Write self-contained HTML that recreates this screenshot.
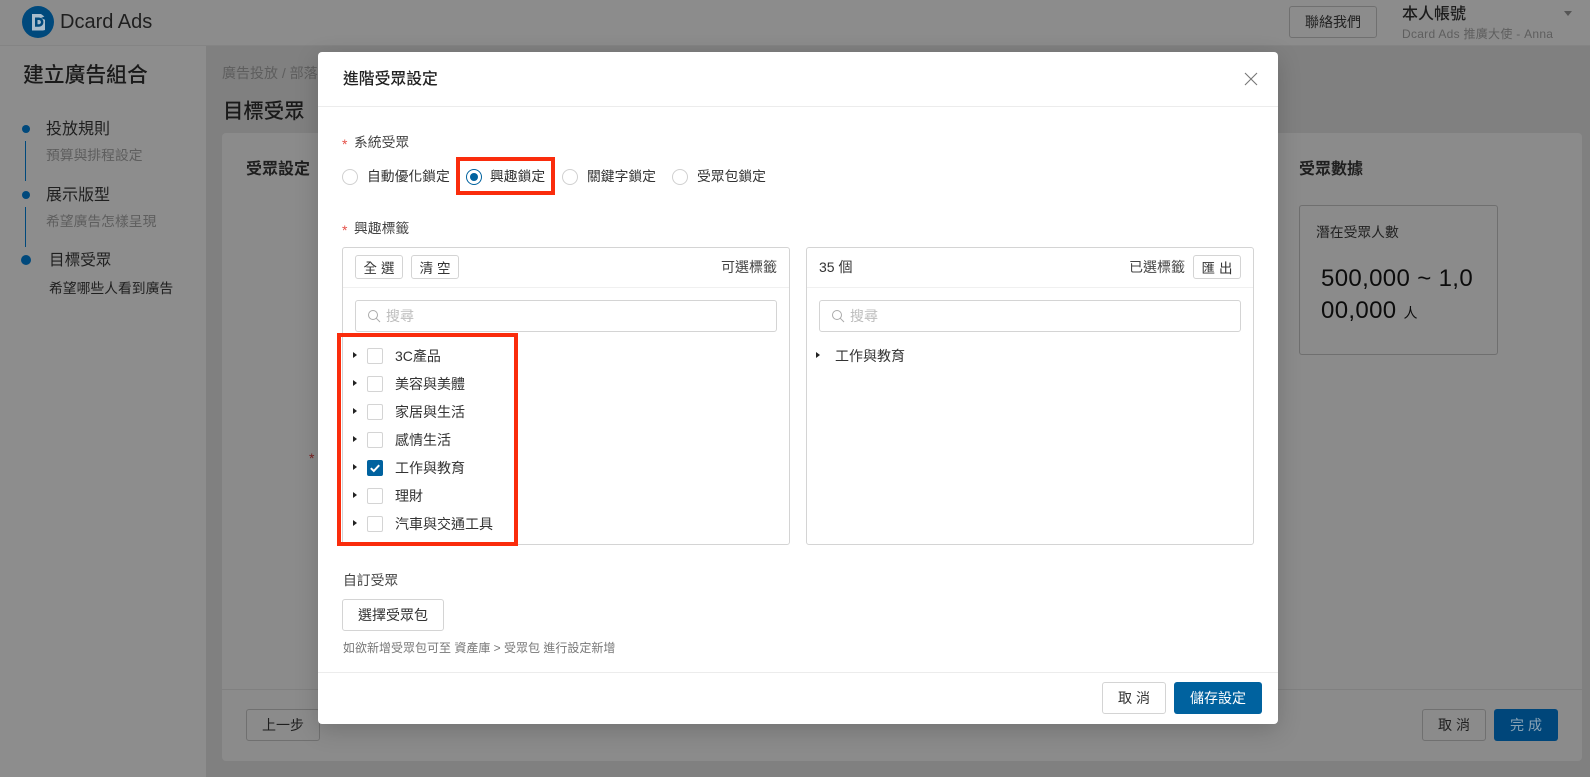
<!DOCTYPE html>
<html lang="zh-Hant"><head><meta charset="utf-8"><title>Dcard Ads</title>
<style>
*{box-sizing:border-box;margin:0;padding:0}
html,body{width:1590px;height:777px;overflow:hidden;background:#808080}
body{position:relative;font-family:"Liberation Sans","Noto Sans CJK TC",sans-serif;font-size:14px;color:#262626}
.a{position:absolute;white-space:nowrap}
.t{position:absolute;white-space:nowrap;line-height:20px;height:20px}
.btn{position:absolute;display:flex;align-items:center;justify-content:center;border-radius:3px;white-space:nowrap;font-size:14px}
.sp{letter-spacing:4px;padding-left:4px}
.d{border:1px solid #707070;color:#1f1f1f}
.w{border:1px solid #d4d4d4;background:#fff;color:#333}
.radio{position:absolute;width:16px;height:16px;border-radius:50%;border:1px solid #d0d0d0;background:#fff}
.cb{position:absolute;left:367px;width:16px;height:16px;border:1px solid #d4d4d4;border-radius:2px;background:#fff}
.arr{position:absolute;width:0;height:0;border-left:4.5px solid #222;border-top:3.5px solid transparent;border-bottom:3.5px solid transparent}
.red{position:absolute;border:4px solid #fa2c0c}
.panel{position:absolute;border:1px solid #d4d4d4;border-radius:3px}
.search{position:absolute;height:32px;border:1px solid #d4d4d4;border-radius:3px}
.l{font-size:13.800px}
</style></head><body>

<!-- background page -->
<div class="a" style="left:0;top:0;width:1590px;height:46px;background:#8c8c8c;border-bottom:1px solid #848484"></div>
<div class="a" style="left:0;top:46px;width:206px;height:731px;background:#8d8d8d"></div>
<div class="a" style="left:206px;top:46px;width:1384px;height:731px;background:#808080"></div>

<svg class="a" style="left:22px;top:6px" width="32" height="32" viewBox="0 0 32 32">
<circle cx="16" cy="16" r="16" fill="#00497c"/>
<path d="M10 8h9l4 3v13l-2 .5H10z" fill="#a9bccb"/>
<path d="M13 11.5h3.6c3 0 4.8 2 4.8 4.6s-1.900 4.600-4.800 4.600H13z" fill="#00497c"/>
<path d="M15.500 14h1.300c1.300 0 2.100.9 2.100 2.100s-.8 2.100-2.100 2.100h-1.300z" fill="#a9bccb"/>
<path d="M19 12l4.500-2v4z" fill="#00497c"/>
</svg>
<div class="a" style="left:60px;top:8px;font-size:20px;line-height:28px;color:#1f1f1f">Dcard Ads</div>

<div class="btn d" style="left:1289px;top:6px;width:88px;height:32px;color:#222">聯絡我們</div>
<div class="t" style="left:1402px;top:5px;font-size:16px;font-weight:500;color:#1c1c1c">本人帳號</div>
<div class="t" style="left:1402px;top:24px;font-size:12px;letter-spacing:.28px;color:#5e5e5e">Dcard Ads 推廣大使 - Anna</div>
<div class="a" style="left:1564px;top:11px;width:0;height:0;border-top:5px solid #555;border-left:4px solid transparent;border-right:4px solid transparent"></div>

<div class="t" style="left:23px;top:63px;font-size:20.800px;line-height:26px;height:26px;font-weight:500;color:#1a1a1a">建立廣告組合</div>

<div class="a" style="left:22px;top:125px;width:8px;height:8px;border-radius:50%;background:#00497c"></div>
<div class="a" style="left:25px;top:141px;width:1px;height:40px;background:#00497c"></div>
<div class="t" style="left:46px;top:120px;font-size:16px;color:#1f1f1f">投放規則</div>
<div class="t l" style="left:46px;top:146px;color:#5e5e5e">預算與排程設定</div>
<div class="a" style="left:22px;top:191px;width:8px;height:8px;border-radius:50%;background:#00497c"></div>
<div class="a" style="left:25px;top:207px;width:1px;height:40px;background:#00497c"></div>
<div class="t" style="left:46px;top:186px;font-size:16px;color:#1f1f1f">展示版型</div>
<div class="t l" style="left:46px;top:212px;color:#5e5e5e">希望廣告怎樣呈現</div>
<div class="a" style="left:21px;top:255px;width:10px;height:10px;border-radius:50%;background:#00497c"></div>
<div class="t" style="left:49px;top:251px;font-size:15.600px;color:#1f1f1f">目標受眾</div>
<div class="t l" style="left:49px;top:279px;color:#1f1f1f">希望哪些人看到廣告</div>

<div class="t" style="left:222px;top:63px;color:#5e5e5e">廣告投放 / 部落格</div>
<div class="a" style="left:223px;top:99px;font-size:20.400px;line-height:26px;font-weight:500;color:#1a1a1a">目標受眾</div>

<div class="a" style="left:222px;top:133px;width:1360px;height:628px;background:#8b8b8b;border-radius:4px"></div>
<div class="a" style="left:222px;top:689px;width:1360px;height:1px;background:#808080"></div>
<div class="t" style="left:246px;top:160px;font-size:16px;font-weight:700;color:#1f1f1f">受眾設定</div>
<div class="t" style="left:1299px;top:160px;font-size:16px;font-weight:700;color:#1f1f1f">受眾數據</div>
<div class="t" style="left:309px;top:448px;color:#7a1f1f">*</div>

<div class="a" style="left:1299px;top:205px;width:199px;height:150px;border:1px solid #6f6f6f;border-radius:3px"></div>
<div class="t l" style="left:1316px;top:223px;color:#222">潛在受眾人數</div>
<div class="a" style="left:1321px;top:263px;font-size:24px;letter-spacing:.35px;line-height:32px;color:#0c0c0c">500,000 ~ 1,0</div>
<div class="a" style="left:1321px;top:295px;font-size:24px;letter-spacing:.35px;line-height:32px;color:#0c0c0c">00,000 <span style="font-size:14px">人</span></div>

<div class="btn d" style="left:246px;top:709px;width:74px;height:32px">上一步</div>
<div class="btn d sp" style="left:1422px;top:709px;width:64px;height:32px">取消</div>
<div class="btn sp" style="left:1494px;top:709px;width:64px;height:32px;background:#00467a;color:#8aa3b5">完成</div>

<!-- modal -->
<div class="a" style="left:318px;top:52px;width:960px;height:672px;background:#fff;border-radius:4px;box-shadow:0 6px 24px rgba(0,0,0,.18)"></div>
<div class="a" style="left:318px;top:106px;width:960px;height:1px;background:#ececec"></div>
<div class="a" style="left:318px;top:672px;width:960px;height:1px;background:#ececec"></div>
<div class="t" style="left:343px;top:70px;font-size:15.800px;font-weight:500;color:#222">進階受眾設定</div>
<svg class="a" style="left:1244px;top:72px" width="14" height="14" viewBox="0 0 14 14"><path d="M1 1l12 12M13 1L1 13" stroke="#777" stroke-width="1.100" fill="none"/></svg>

<div class="t" style="left:342px;top:134px;color:#e5524a">*</div>
<div class="t l" style="left:354px;top:133px;color:#444">系統受眾</div>
<div class="radio" style="left:342px;top:169px"></div>
<div class="t l" style="left:367px;top:167px;color:#333">自動優化鎖定</div>
<div class="radio" style="left:466px;top:169px;border-color:#00629f"></div>
<div class="a" style="left:470px;top:173px;width:8px;height:8px;border-radius:50%;background:#00629f"></div>
<div class="t l" style="left:490px;top:167px;color:#333">興趣鎖定</div>
<div class="radio" style="left:562px;top:169px"></div>
<div class="t l" style="left:587px;top:167px;color:#333">關鍵字鎖定</div>
<div class="radio" style="left:672px;top:169px"></div>
<div class="t l" style="left:697px;top:167px;color:#333">受眾包鎖定</div>
<div class="red" style="left:456px;top:157px;width:99px;height:38px"></div>

<div class="t" style="left:342px;top:220px;color:#e5524a">*</div>
<div class="t l" style="left:354px;top:219px;color:#444">興趣標籤</div>

<div class="panel" style="left:342px;top:247px;width:448px;height:298px"></div>
<div class="a" style="left:343px;top:287px;width:446px;height:1px;background:#f0f0f0"></div>
<div class="btn w sp" style="left:355px;top:255px;width:48px;height:24px;font-size:13.500px">全選</div>
<div class="btn w sp" style="left:411px;top:255px;width:48px;height:24px;font-size:13.500px">清空</div>
<div class="t" style="left:721px;top:257px;color:#444">可選標籤</div>
<div class="search" style="left:355px;top:300px;width:422px"></div>
<svg class="a" style="left:367px;top:309px" width="14" height="14" viewBox="0 0 14 14"><circle cx="6" cy="6" r="4.500" stroke="#aaa" fill="none"/><path d="M9.300 9.300L13 13" stroke="#aaa" fill="none"/></svg>
<div class="t" style="left:386px;top:306px;color:#bdbdbd">搜尋</div>

<div class="panel" style="left:806px;top:247px;width:448px;height:298px"></div>
<div class="a" style="left:807px;top:287px;width:446px;height:1px;background:#f0f0f0"></div>
<div class="t" style="left:819px;top:257px;color:#333">35 個</div>
<div class="t" style="left:1129px;top:257px;color:#444">已選標籤</div>
<div class="btn w sp" style="left:1193px;top:255px;width:48px;height:24px;font-size:13.500px">匯出</div>
<div class="search" style="left:819px;top:300px;width:422px"></div>
<svg class="a" style="left:831px;top:309px" width="14" height="14" viewBox="0 0 14 14"><circle cx="6" cy="6" r="4.500" stroke="#aaa" fill="none"/><path d="M9.300 9.300L13 13" stroke="#aaa" fill="none"/></svg>
<div class="t" style="left:850px;top:306px;color:#bdbdbd">搜尋</div>
<div class="arr" style="left:816px;top:352px"></div>
<div class="t" style="left:835px;top:346px;color:#333">工作與教育</div>

<div class="arr" style="left:353px;top:352px"></div><div class="cb" style="top:348px"></div><div class="t" style="left:395px;top:346px;color:#333">3C產品</div>
<div class="arr" style="left:353px;top:380px"></div><div class="cb" style="top:376px"></div><div class="t" style="left:395px;top:374px;color:#333">美容與美體</div>
<div class="arr" style="left:353px;top:408px"></div><div class="cb" style="top:404px"></div><div class="t" style="left:395px;top:402px;color:#333">家居與生活</div>
<div class="arr" style="left:353px;top:436px"></div><div class="cb" style="top:432px"></div><div class="t" style="left:395px;top:430px;color:#333">感情生活</div>
<div class="arr" style="left:353px;top:464px"></div>
<div class="cb" style="top:460px;background:#00629f;border-color:#00629f"></div>
<svg class="a" style="left:367px;top:460px" width="16" height="16" viewBox="0 0 16 16"><path d="M3.800 8.200l3 2.800 5.400-5.800" stroke="#fff" stroke-width="2" fill="none"/></svg>
<div class="t" style="left:395px;top:458px;color:#333">工作與教育</div>
<div class="arr" style="left:353px;top:492px"></div><div class="cb" style="top:488px"></div><div class="t" style="left:395px;top:486px;color:#333">理財</div>
<div class="arr" style="left:353px;top:520px"></div><div class="cb" style="top:516px"></div><div class="t" style="left:395px;top:514px;color:#333">汽車與交通工具</div>
<div class="red" style="left:337px;top:333px;width:181px;height:213px"></div>

<div class="t l" style="left:343px;top:571px;color:#444">自訂受眾</div>
<div class="btn w" style="left:342px;top:599px;width:102px;height:32px">選擇受眾包</div>
<div class="t" style="left:343px;top:638px;font-size:12px;color:#777">如欲新增受眾包可至 資產庫 &gt; 受眾包 進行設定新增</div>

<div class="btn w sp" style="left:1102px;top:682px;width:64px;height:32px">取消</div>
<div class="btn" style="left:1174px;top:682px;width:88px;height:32px;background:#00629f;color:#fff">儲存設定</div>

</body></html>
